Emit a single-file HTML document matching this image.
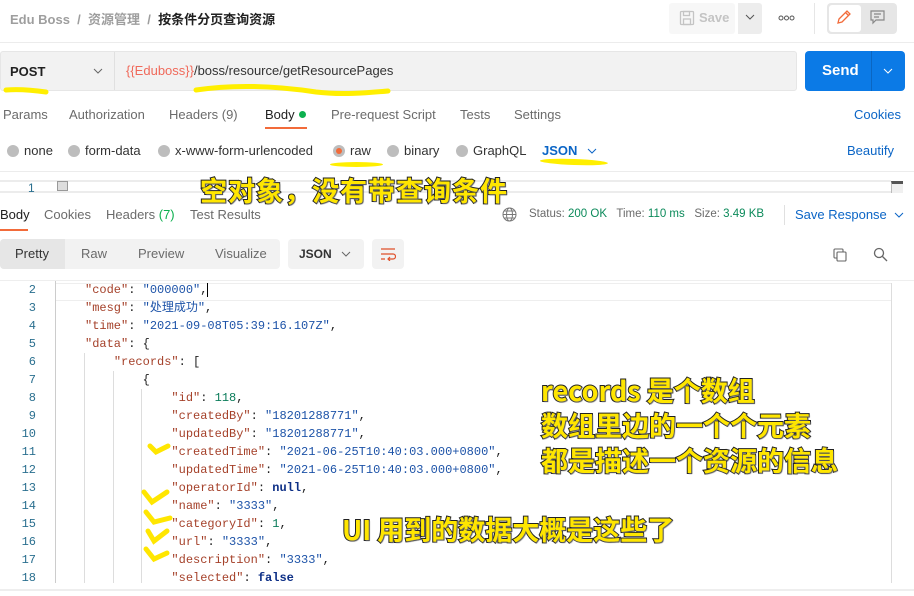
<!DOCTYPE html>
<html><head><meta charset="utf-8"><style>
*{margin:0;padding:0;box-sizing:border-box}
body{width:914px;height:596px;overflow:hidden;background:#fff;font-family:"Liberation Sans","Noto Sans CJK SC",sans-serif;position:relative;color:#212121}
.a{position:absolute;white-space:nowrap}
.g{color:#6b6b6b;font-size:13px}
.rad{position:absolute;width:12px;height:12px;border-radius:50%;background:#bdbdbd}
.code{font-family:"Liberation Mono","Noto Sans CJK SC",monospace;font-size:12px;position:absolute;white-space:pre;line-height:18px}
.k{color:#a5412a}.s{color:#1d53a8}.n{color:#0b7c5a}.b{color:#0d2f86;font-weight:bold}
.ln{color:#2a6f8f;font-family:"Liberation Mono",monospace;font-size:12px;position:absolute;width:36px;text-align:right}
.y{color:#ffe600;font-family:"Noto Sans CJK SC","WenQuanYi Zen Hei",sans-serif;font-weight:700;-webkit-text-stroke:2px #222;paint-order:stroke fill;text-shadow:1px 1px 1px #666}
.hl{position:absolute;background:#ffef00;border-radius:3px}
</style></head><body>
<!-- top bar -->
<div class="a" style="left:10px;top:9px;font-size:13px;font-weight:bold;color:#9e9e9e">Edu Boss&nbsp; /&nbsp; 资源管理&nbsp; /&nbsp; <span style="color:#212121">按条件分页查询资源</span></div>
<div class="a" style="left:669px;top:3px;width:66px;height:31px;background:#f7f7f7;border-radius:3px"></div>
<svg class="a" style="left:679px;top:10px" width="16" height="16" viewBox="0 0 16 16" fill="none" stroke="#c4c4c4" stroke-width="1.3"><rect x="1.5" y="1.5" width="13" height="13" rx="1"/><rect x="4.5" y="1.5" width="6" height="4"/><rect x="4.5" y="9" width="7" height="5.5"/></svg>
<div class="a" style="left:699px;top:10px;font-size:13px;font-weight:bold;color:#c4c4c4">Save</div>
<div class="a" style="left:738px;top:3px;width:24px;height:31px;background:#ededed;border-radius:0 3px 3px 0"></div>
<svg class="a" style="left:745px;top:14px" width="10" height="7"><path d="M1 1l4 4 4-4" stroke="#555" fill="none"/></svg>
<svg class="a" style="left:778px;top:15px" width="17" height="6" fill="none" stroke="#555" stroke-width="1"><circle cx="3" cy="3" r="2"/><circle cx="8.5" cy="3" r="2"/><circle cx="14" cy="3" r="2"/></svg>
<div class="a" style="left:814px;top:3px;width:1px;height:31px;background:#e6e6e6"></div>
<div class="a" style="left:827px;top:3px;width:70px;height:31px;background:#e6e6e6;border-radius:4px"></div>
<div class="a" style="left:829px;top:5px;width:32px;height:27px;background:#fff;border-radius:3px"></div>
<svg class="a" style="left:836px;top:9px" width="16" height="16" viewBox="0 0 16 16" fill="none" stroke="#f26b3a" stroke-width="1.3"><path d="M2 14l1-4 8-8 3 3-8 8z M9.5 3.5l3 3"/></svg>
<svg class="a" style="left:870px;top:10px" width="15" height="15" viewBox="0 0 15 15" fill="none" stroke="#888" stroke-width="1.2"><path d="M1 1h13v9H6l-3 3v-3H1z M4 4h7 M4 7h5"/></svg>
<div class="a" style="left:0;top:42px;width:914px;height:1px;background:#ececec"></div>
<!-- request row -->
<div class="a" style="left:0;top:51px;width:797px;height:40px;background:#f2f2f2;border:1px solid #e6e6e6;border-radius:3px"></div>
<div class="a" style="left:114px;top:52px;width:1px;height:38px;background:#e0e0e0"></div>
<div class="a" style="left:10px;top:64px;font-size:13px;font-weight:bold">POST</div>
<svg class="a" style="left:93px;top:68px" width="10" height="7"><path d="M1 1l4 4 4-4" stroke="#666" fill="none"/></svg>
<div class="a" style="left:126px;top:63px;font-size:13px;color:#333"><span style="color:#f06a5b">{{Eduboss}}</span>/boss/resource/getResourcePages</div>
<div class="a" style="left:805px;top:51px;width:100px;height:40px;background:#0b7ae6;border-radius:4px"></div>
<div class="a" style="left:871px;top:51px;width:1px;height:40px;background:#0a66c2"></div>
<div class="a" style="left:822px;top:62px;font-size:15px;font-weight:bold;color:#fff">Send</div>
<svg class="a" style="left:883px;top:68px" width="10" height="7"><path d="M1 1l4 4 4-4" stroke="#fff" fill="none"/></svg>
<svg class="a" style="left:0;top:80px" width="400" height="20" fill="none" stroke="#ffef00" stroke-width="5" stroke-linecap="round"><path d="M6 10c12 -1 26 0 40 2"/><path d="M196 10c40 -6 80 -4 120 2c25 3 50 1 72 -1"/></svg>
<!-- tabs -->
<div class="a g" style="left:3px;top:107px">Params</div>
<div class="a g" style="left:69px;top:107px">Authorization</div>
<div class="a g" style="left:169px;top:107px">Headers (9)</div>
<div class="a" style="left:265px;top:107px;font-size:13px;color:#212121">Body</div>
<div class="a" style="left:299px;top:111px;width:7px;height:7px;border-radius:50%;background:#0cb04f"></div>
<div class="a" style="left:265px;top:127px;width:42px;height:2px;background:#f26b3a"></div>
<div class="a g" style="left:331px;top:107px">Pre-request Script</div>
<div class="a g" style="left:460px;top:107px">Tests</div>
<div class="a g" style="left:514px;top:107px">Settings</div>
<div class="a" style="left:854px;top:107px;font-size:13px;color:#0b65c6">Cookies</div>
<!-- radios -->
<div class="rad" style="left:7px;top:145px"></div><div class="a g" style="left:24px;top:143px;color:#333">none</div>
<div class="rad" style="left:68px;top:145px"></div><div class="a g" style="left:85px;top:143px;color:#333">form-data</div>
<div class="rad" style="left:158px;top:145px"></div><div class="a g" style="left:175px;top:143px;color:#333">x-www-form-urlencoded</div>
<div class="rad" style="left:333px;top:145px"></div><div class="a" style="left:336px;top:148px;width:6px;height:6px;border-radius:50%;background:#f26b3a"></div><div class="a g" style="left:350px;top:143px;color:#333">raw</div>
<div class="rad" style="left:387px;top:145px"></div><div class="a g" style="left:404px;top:143px;color:#333">binary</div>
<div class="rad" style="left:456px;top:145px"></div><div class="a g" style="left:473px;top:143px;color:#333">GraphQL</div>
<div class="a" style="left:542px;top:143px;font-size:13px;font-weight:bold;color:#0b65c6">JSON</div>
<svg class="a" style="left:587px;top:148px" width="10" height="7"><path d="M1 1l4 4 4-4" stroke="#0b65c6" fill="none"/></svg>
<div class="a" style="left:847px;top:143px;font-size:13px;color:#0b65c6">Beautify</div>
<div class="hl" style="left:330px;top:162px;width:53px;height:5px;border-radius:50%"></div>
<div class="hl" style="left:540px;top:159px;width:68px;height:6px;border-radius:50%;transform:rotate(2deg)"></div>
<div class="a" style="left:0;top:171px;width:914px;height:1px;background:#ececec"></div>
<!-- editor line -->
<div class="a" style="left:0;top:180px;width:891px;height:13px;border-top:2px solid #ececec;border-bottom:2px solid #ececec"></div>
<div class="a" style="left:28px;top:181px;font-size:12px;color:#2a6f8f">1</div>
<div class="a" style="left:57px;top:181px;width:11px;height:10px;background:#ddd;border:1px solid #999"></div>
<div class="a" style="left:891px;top:181px;width:12px;height:12px;border-top:3px solid #555;border-left:1px solid #bbb;background:#f0f0f0"></div>
<div class="a y" style="left:200px;top:170px;font-size:27px;letter-spacing:1px">空对象，没有带查询条件</div>
<!-- response tabs -->
<div class="a" style="left:0;top:207px;font-size:13px;color:#212121">Body</div>
<div class="a" style="left:0;top:229px;width:28px;height:2px;background:#f26b3a"></div>
<div class="a g" style="left:44px;top:207px">Cookies</div>
<div class="a g" style="left:106px;top:207px">Headers <span style="color:#0cb04f">(7)</span></div>
<div class="a g" style="left:190px;top:207px">Test Results</div>
<svg class="a" style="left:502px;top:207px" width="15" height="15" viewBox="0 0 15 15" fill="none" stroke="#777" stroke-width="1"><circle cx="7.5" cy="7.5" r="6.5"/><ellipse cx="7.5" cy="7.5" rx="3" ry="6.5"/><path d="M1 7.5h13 M2 4h11 M2 11h11"/></svg>
<div class="a" style="left:529px;top:208px;font-size:11.5px;color:#6b6b6b">Status: <span style="color:#0b8a5a">200 OK</span>&nbsp;&nbsp; Time: <span style="color:#0b8a5a">110 ms</span>&nbsp;&nbsp; Size: <span style="color:#0b8a5a">3.49 KB</span></div>
<div class="a" style="left:784px;top:205px;width:1px;height:20px;background:#e0e0e0"></div>
<div class="a" style="left:795px;top:207px;font-size:13px;color:#0b65c6">Save Response</div>
<svg class="a" style="left:894px;top:212px" width="10" height="7"><path d="M1 1l4 4 4-4" stroke="#0b65c6" fill="none"/></svg>
<!-- toolbar -->
<div class="a" style="left:0;top:239px;width:280px;height:30px;background:#f2f2f2;border-radius:4px"></div>
<div class="a" style="left:0;top:239px;width:65px;height:30px;background:#e6e6e6;border-radius:4px 0 0 4px"></div>
<div class="a" style="left:15px;top:246px;font-size:13px;color:#333">Pretty</div>
<div class="a g" style="left:81px;top:246px">Raw</div>
<div class="a g" style="left:138px;top:246px">Preview</div>
<div class="a g" style="left:215px;top:246px">Visualize</div>
<div class="a" style="left:288px;top:239px;width:76px;height:30px;background:#f2f2f2;border-radius:4px"></div>
<div class="a" style="left:299px;top:247px;font-size:12px;font-weight:bold;color:#333">JSON</div>
<svg class="a" style="left:341px;top:251px" width="10" height="7"><path d="M1 1l4 4 4-4" stroke="#666" fill="none"/></svg>
<div class="a" style="left:372px;top:239px;width:32px;height:30px;background:#f2f2f2;border-radius:4px"></div>
<svg class="a" style="left:380px;top:247px" width="16" height="14" fill="none" stroke="#e0502a" stroke-width="1.2"><path d="M1 2h14 M1 7h12a2.5 2.5 0 0 1 0 5H8 M10 10l-2 2 2 2 M1 12h4"/></svg>
<svg class="a" style="left:833px;top:248px" width="14" height="14" fill="none" stroke="#666" stroke-width="1.1"><rect x="1" y="1" width="9" height="9" rx="1"/><rect x="4" y="4" width="9" height="9" rx="1" fill="#fff"/></svg>
<svg class="a" style="left:873px;top:247px" width="15" height="15" fill="none" stroke="#666" stroke-width="1.3"><circle cx="6" cy="6" r="4.5"/><path d="M9.5 9.5l4.5 4.5"/></svg>
<!-- code -->
<div class="a" style="left:0;top:280px;width:914px;height:1px;background:#eee"></div>
<div class="a" style="left:56px;top:283px;width:835px;height:18px;border-top:1px solid #eee;border-bottom:1px solid #eee"></div>
<div class="a" style="left:55px;top:281px;width:1px;height:302px;background:#ccc"></div>
<div class="a" style="left:84px;top:353px;width:1px;height:230px;background:#ddd"></div>
<div class="a" style="left:113px;top:371px;width:1px;height:212px;background:#ddd"></div>
<div class="a" style="left:141px;top:389px;width:1px;height:194px;background:#ddd"></div>
<div class="a" style="left:891px;top:283px;width:1px;height:300px;background:#ddd"></div>
<div class="a" style="left:0;top:589px;width:914px;height:2px;background:#eee"></div>
<div class="ln" style="left:0;top:281px;line-height:18px;white-space:pre">2
3
4
5
6
7
8
9
10
11
12
13
14
15
16
17
18</div>
<div class="code" style="left:85px;top:281px"><span class="k">"code"</span>: <span class="s">"000000"</span>,<span style="border-left:1px solid #000"></span>
<span class="k">"mesg"</span>: <span class="s">"处理成功"</span>,
<span class="k">"time"</span>: <span class="s">"2021-09-08T05:39:16.107Z"</span>,
<span class="k">"data"</span>: {
    <span class="k">"records"</span>: [
        {
            <span class="k">"id"</span>: <span class="n">118</span>,
            <span class="k">"createdBy"</span>: <span class="s">"18201288771"</span>,
            <span class="k">"updatedBy"</span>: <span class="s">"18201288771"</span>,
            <span class="k">"createdTime"</span>: <span class="s">"2021-06-25T10:40:03.000+0800"</span>,
            <span class="k">"updatedTime"</span>: <span class="s">"2021-06-25T10:40:03.000+0800"</span>,
            <span class="k">"operatorId"</span>: <span class="b">null</span>,
            <span class="k">"name"</span>: <span class="s">"3333"</span>,
            <span class="k">"categoryId"</span>: <span class="n">1</span>,
            <span class="k">"url"</span>: <span class="s">"3333"</span>,
            <span class="k">"description"</span>: <span class="s">"3333"</span>,
            <span class="k">"selected"</span>: <span class="b">false</span></div>
<!-- check marks -->
<svg class="a" style="left:140px;top:438px" width="40" height="140" fill="none" stroke="#ffe600" stroke-width="5" stroke-linecap="round"><path d="M10 8l6 6 12-6"/><path d="M4 54l8 10 15-10"/><path d="M6 74l8 10 16-4"/><path d="M8 93l6 10 13-10"/><path d="M6 111l8 10 13-6"/></svg>
<div class="a y" style="left:541px;top:372px;font-size:27px;line-height:35px;white-space:pre">records 是个数组
数组里边的一个个元素
都是描述一个资源的信息</div>
<div class="a y" style="left:342px;top:509px;font-size:27px">UI 用到的数据大概是这些了</div>
</body></html>
